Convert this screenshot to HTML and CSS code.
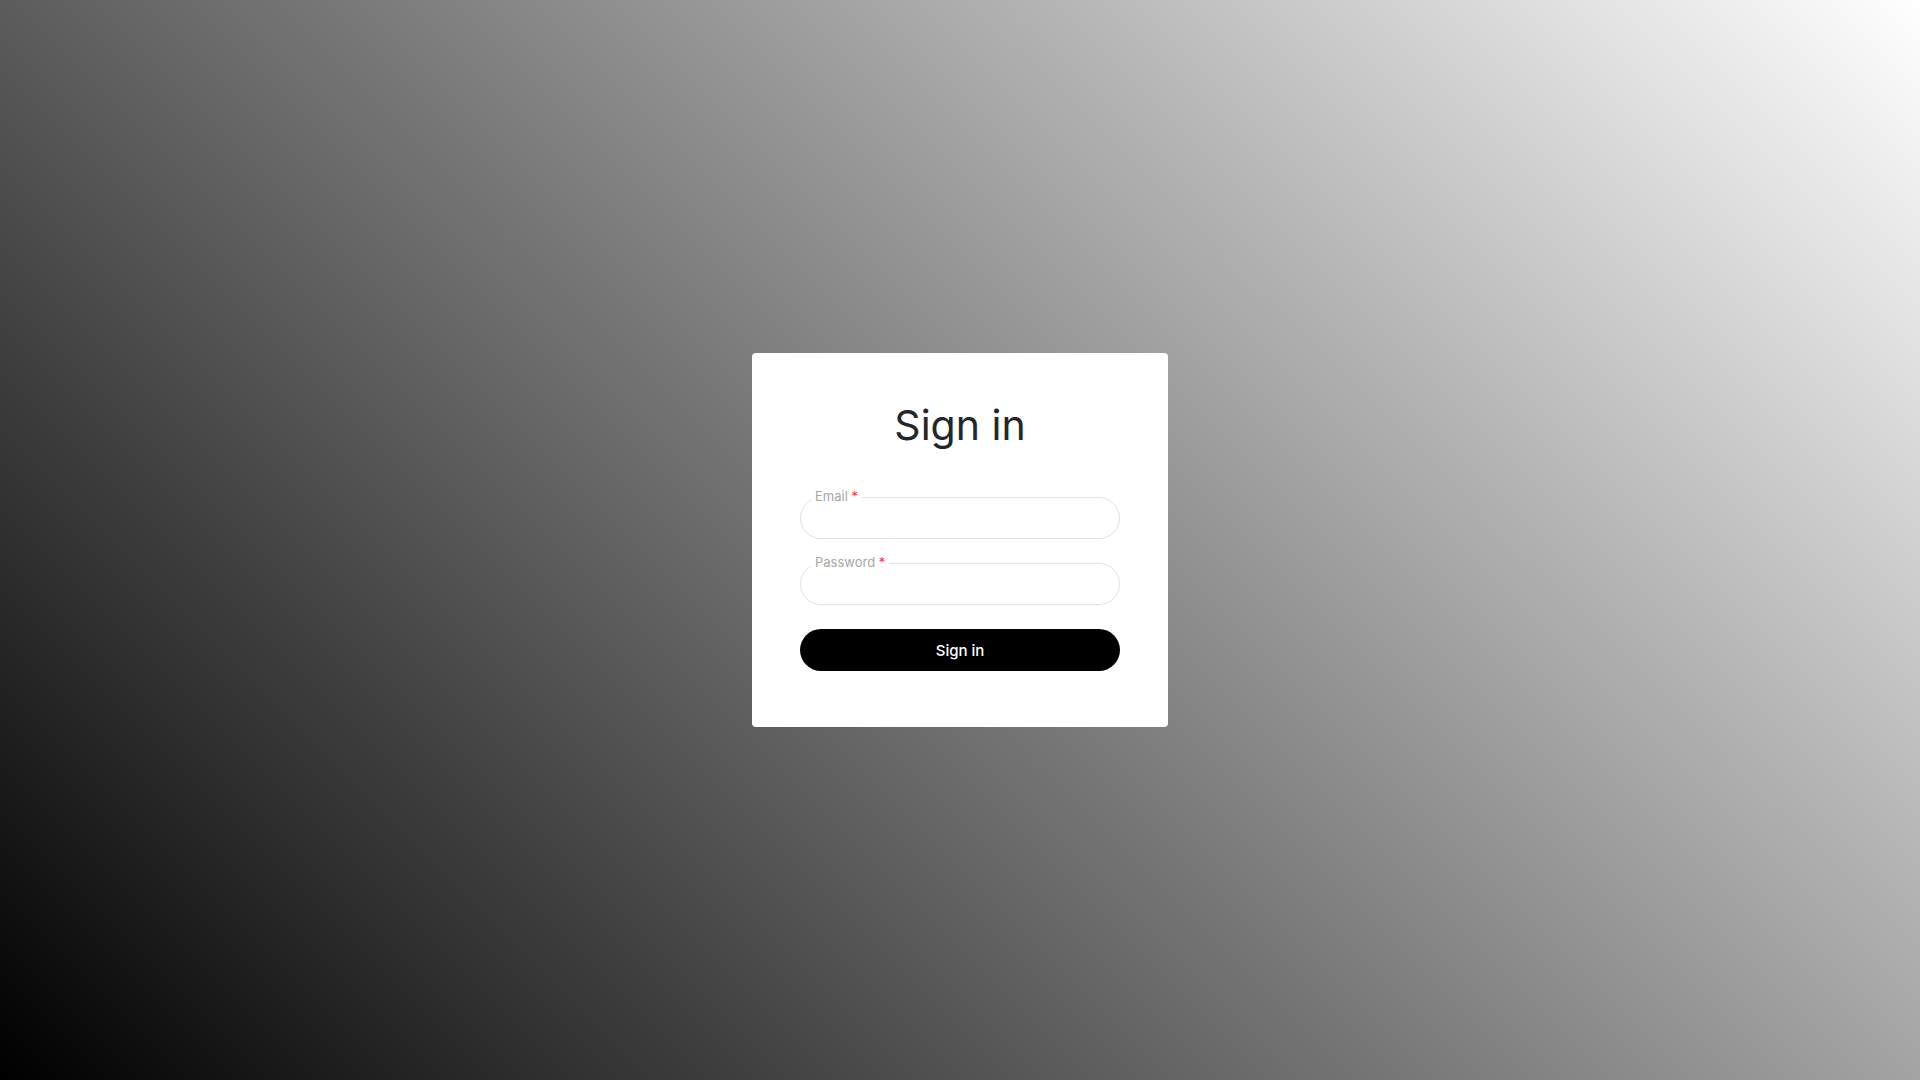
FILE: index.html
```html
<!DOCTYPE html>
<html lang="en">
<head>
<meta charset="utf-8">
<title>Sign in</title>
<link rel="stylesheet" href="styles.css">
</head>
<body>
<main class="page">
  <form class="card">
    <h1 class="title">Sign in</h1>
    <div class="field">
      <label class="label" for="email">Email <span class="req">*</span></label>
      <input class="input" id="email" type="email">
    </div>
    <div class="field">
      <label class="label" for="password">Password <span class="req">*</span></label>
      <input class="input" id="password" type="password">
    </div>
    <button class="btn" type="button">Sign in</button>
  </form>
</main>
</body>
</html>
```
FILE: styles.css
```css
* { box-sizing: border-box; }
html, body { margin: 0; height: 100%; }
body {
  font-family: Inter, "Liberation Sans", sans-serif;
  background: linear-gradient(45deg, #000 0%, #fff 100%);
}
.page {
  height: 100vh;
  display: flex;
  align-items: center;
  justify-content: center;
}
.card {
  width: 416px;
  background: #fff;
  border-radius: 4px;
  padding: 48px 48px 56px;
  display: flex;
  flex-direction: column;
}
.title {
  margin: 0 0 48px;
  font-size: 41px;
  line-height: 48px;
  font-weight: 400;
  color: #23262a;
  text-align: center;
  letter-spacing: 0;
}
.field {
  position: relative;
  margin-bottom: 24px;
}
.input {
  display: block;
  width: 100%;
  height: 42px;
  border: 1px solid #e1e1e8;
  border-radius: 21px;
  padding: 0 16px;
  font: inherit;
  outline: none;
  background: #fff;
}
.label {
  position: absolute;
  left: 11px;
  top: -8px;
  padding: 0 4px;
  background: #fff;
  font-size: 13px;
  line-height: 14px;
  color: #a6a6a6;
}
.req { color: #ff3030; }
.btn {
  height: 42px;
  border: none;
  border-radius: 21px;
  background: #000;
  color: #fff;
  font-family: inherit;
  font-size: 15px;
  font-weight: 500;
  cursor: pointer;
}
```
